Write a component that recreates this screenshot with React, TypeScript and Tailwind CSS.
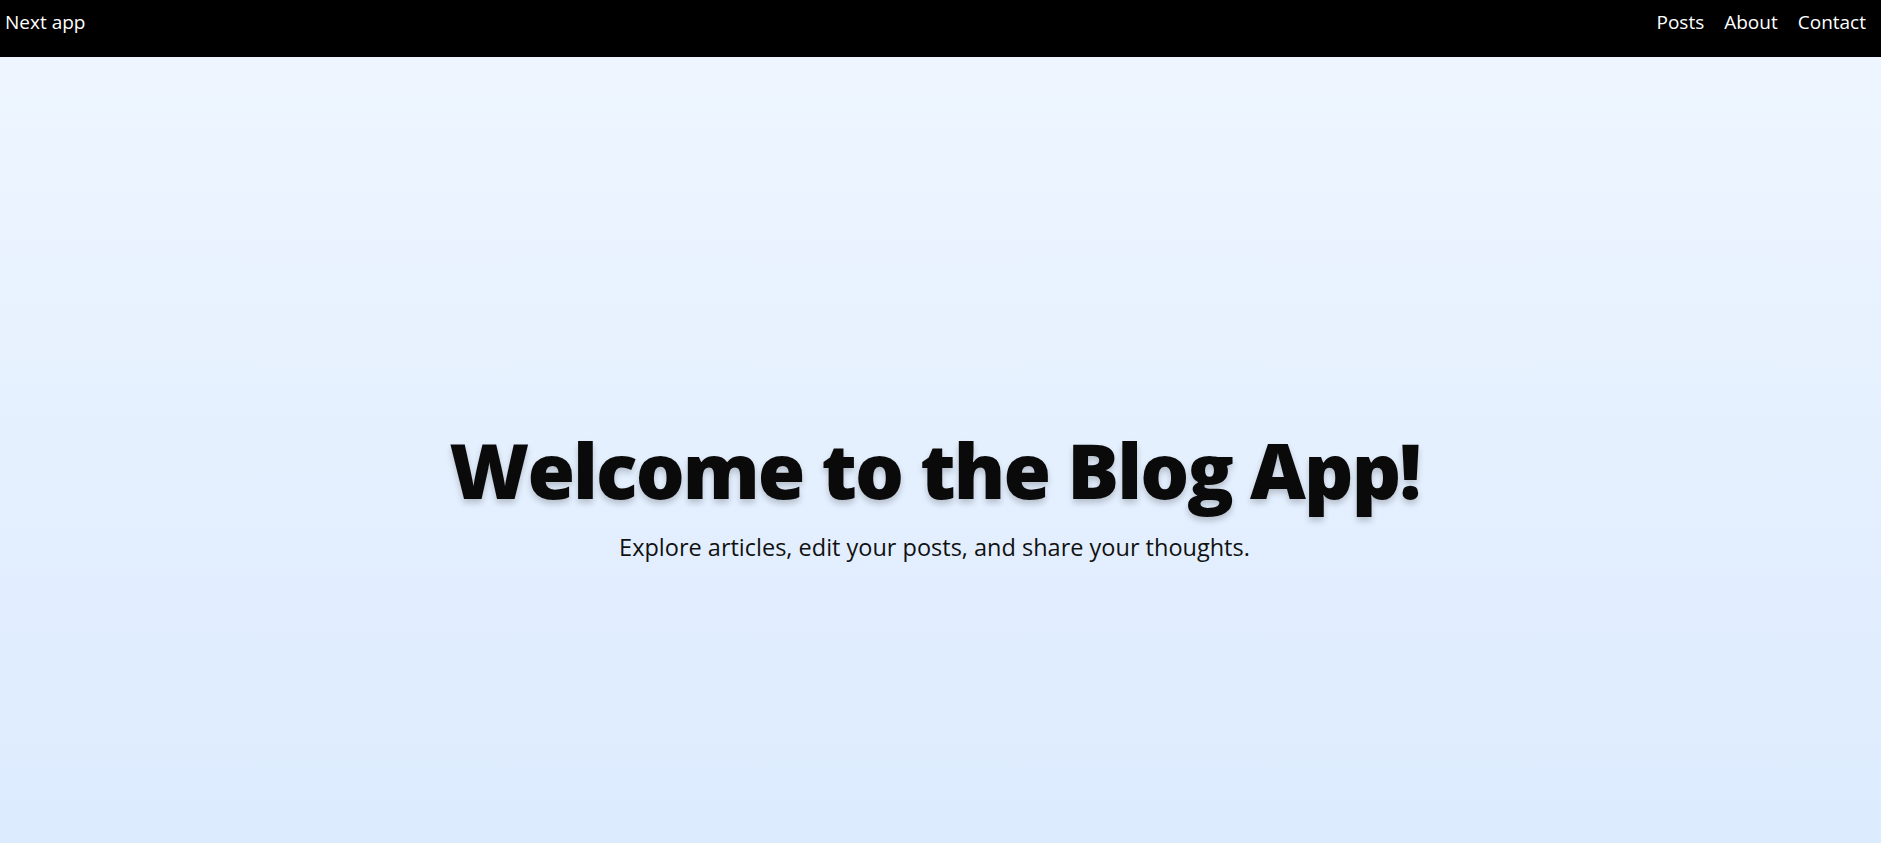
import React from 'react';

const App: React.FC = () => {
  return (
    <div className="min-h-screen bg-gradient-to-b from-blue-50 to-blue-100 font-['Open_Sans',sans-serif]">
      {/* ── Navbar ── */}
      <nav className="h-[57px] bg-black text-white flex justify-between items-start pt-2 pl-[5px] pr-[15px]">
        <a href="#" className="text-[19px] leading-7">Next app</a>
        <div className="flex gap-[20px] text-[19px] leading-7">
          <a href="#">Posts</a>
          <a href="#">About</a>
          <a href="#">Contact</a>
        </div>
      </nav>

      {/* ── Hero ── */}
      <section className="h-screen pt-[40px] pr-[12px] flex flex-col items-center justify-center text-center">
        <h1 className="text-[77px] leading-none font-extrabold tracking-tight text-[#0a0a0a] [text-shadow:0_4px_6px_rgba(0,0,0,0.2)]">
          Welcome to the Blog App!
        </h1>
        <p className="mt-[22px] text-[23.5px] text-[#111]">
          Explore articles, edit your posts, and share your thoughts.
        </p>
      </section>
    </div>
  );
};

export default App;
